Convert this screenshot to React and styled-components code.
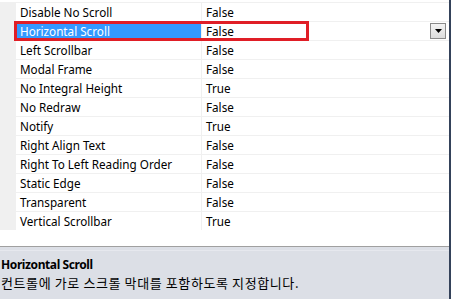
import styled, { createGlobalStyle } from "styled-components";

const GlobalStyle = createGlobalStyle`
  html, body {
    margin: 0;
    padding: 0;
    background: #ffffff;
    overflow: hidden;
  }
`;

const PROPERTIES = [
  ["Disable No Scroll", "False"],
  ["Horizontal Scroll", "False"],
  ["Left Scrollbar", "False"],
  ["Modal Frame", "False"],
  ["No Integral Height", "True"],
  ["No Redraw", "False"],
  ["Notify", "True"],
  ["Right Align Text", "False"],
  ["Right To Left Reading Order", "False"],
  ["Static Edge", "False"],
  ["Transparent", "False"],
  ["Vertical Scrollbar", "True"],
];

const SELECTED = "Horizontal Scroll";

const Frame = styled.div`
  width: 451px;
  height: 299px;
  display: flex;
  flex-direction: column;
  box-sizing: border-box;
  border-right: 2px solid #34425a;
  font-family: "Noto Sans", "Liberation Sans", sans-serif;
  font-size: 11.7px;
  color: #000;
`;

const Grid = styled.div`
  position: relative;
  flex: 1;
  padding-top: 2px;
  background: #ffffff;
`;

const Row = styled.div`
  display: grid;
  grid-template-columns: 16px 186px 1fr;
  height: 18px;
  border-top: 1px solid #f0f0f0;
  &:last-child {
    border-bottom: 1px solid #f0f0f0;
  }
`;

const Gutter = styled.div`
  background: #f0f0f0;
`;

const Cell = styled.div`
  display: flex;
  align-items: center;
  padding-left: 4px;
  white-space: nowrap;
  overflow: hidden;
  background: ${(p) => (p.$selected ? "#3399ff" : "#ffffff")};
  color: ${(p) => (p.$selected ? "#ffffff" : "#000000")};
  border-right: ${(p) => (p.$name ? "1px solid #f0f0f0" : "none")};
`;

const ValueCell = styled(Cell)`
  justify-content: space-between;
  padding-right: 3px;
`;

const DropButton = styled.div`
  width: 16px;
  height: 16px;
  box-sizing: border-box;
  border: 1px solid #8a8a8a;
  background: linear-gradient(#f4f4f4, #dcdcdc);
  display: flex;
  align-items: center;
  justify-content: center;
`;

const Marker = styled.div`
  position: absolute;
  left: 14px;
  top: 21px;
  width: 295px;
  height: 20px;
  box-sizing: border-box;
  border: 3px solid #e01e26;
  pointer-events: none;
`;

const Splitter = styled.div`
  height: 3px;
  border-top: 1px solid #a0a0a0;
  background: #dcdfe6;
  border-bottom: 1px solid #e6e8ee;
`;

const Description = styled.div`
  height: 42px;
  background: #dcdfe6;
  padding: 6px 0 0 1px;
  display: flex;
  flex-direction: column;
  gap: 2px;
`;

const Title = styled.div`
  font-weight: bold;
  font-size: 12px;
  letter-spacing: -0.4px;
  line-height: 16px;
`;

const Help = styled.div`
  font-family: "Noto Sans CJK KR", "Noto Sans", sans-serif;
  line-height: 16px;
  font-size: 13px;
  letter-spacing: 0.6px;
`;

export default function App() {
  return (
    <>
      <GlobalStyle />
      <Frame>
        <Grid>
          {PROPERTIES.map(([name, value]) => {
            const selected = name === SELECTED;
            return (
              <Row key={name}>
                <Gutter />
                <Cell $name $selected={selected}>
                  {name}
                </Cell>
                <ValueCell>
                  <span>{value}</span>
                  {selected && (
                    <DropButton>
                      <svg width="7" height="4" viewBox="0 0 7 4">
                        <path d="M0 0h7L3.5 4z" fill="#000" />
                      </svg>
                    </DropButton>
                  )}
                </ValueCell>
              </Row>
            );
          })}
          <Marker />
        </Grid>
        <Splitter />
        <Description>
          <Title>Horizontal Scroll</Title>
          <Help>컨트롤에 가로 스크롤 막대를 포함하도록 지정합니다.</Help>
        </Description>
      </Frame>
    </>
  );
}
